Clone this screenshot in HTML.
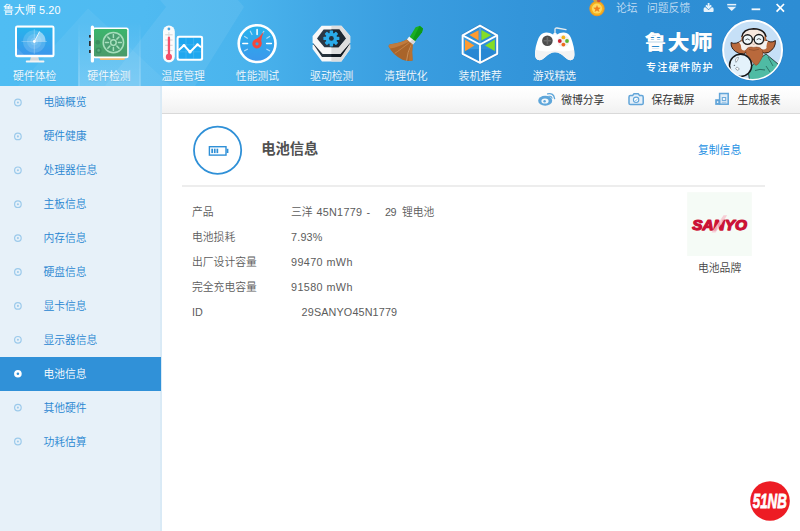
<!DOCTYPE html>
<html lang="zh-CN">
<head>
<meta charset="utf-8">
<title>鲁大师 5.20</title>
<style>
*{box-sizing:border-box;margin:0;padding:0}
html,body{width:800px;height:531px;overflow:hidden;background:#fff}
body{font-family:"Liberation Sans","Noto Sans CJK SC",sans-serif;font-size:10.8px;font-weight:350;color:#555;position:relative}
#hdr{position:absolute;left:0;top:0;width:800px;height:85.8px;background:linear-gradient(90deg,#4fbdf3 0%,#4fbaf1 18%,#4ab4ed 30%,#41a8e6 40%,#3a9ee0 50%,#3395da 65%,#2e8fd5 80%,#2d8dd4 100%);overflow:hidden}
#hdr svg.art{position:absolute;left:0;top:0}
#title{position:absolute;left:3px;top:1.6px;color:#fff;font-size:10.8px;font-weight:400;letter-spacing:.15px;line-height:16px;white-space:nowrap}
.lbl{position:absolute;top:67.8px;width:60px;font-weight:350;text-shadow:0 1px 1px rgba(0,0,0,.08);text-align:center;color:#f4fafe;font-size:10.8px;line-height:16px;white-space:nowrap}
.tl{position:absolute;top:0;color:#c2ddf3;font-size:10.8px;line-height:16px;white-space:nowrap}
#brand{position:absolute;left:644.6px;top:28.2px;color:#fff;font-size:22px;font-weight:900;line-height:32px;white-space:nowrap;letter-spacing:1px;text-shadow:0 1px 1px rgba(0,0,0,.18);transform:scaleY(.935);transform-origin:0 0}
#slogan{position:absolute;left:646px;top:59.6px;color:#fff;font-size:10.1px;font-weight:500;line-height:16px;white-space:nowrap;letter-spacing:1.2px}
#side{position:absolute;left:0;top:86px;width:162px;height:445px;background:linear-gradient(90deg,#e7f1f9 0,#e7f1f9 159.6px,#d9eaf6 160.6px,#d9eaf6 100%)}
.it{position:absolute;left:0;width:162px;height:34px;color:#2886d1;font-size:10.8px;line-height:34.6px;padding-left:43.4px;white-space:nowrap}
.it.on{background:#3091d8;color:#fff;top:271px!important;width:161.2px;height:33.8px;line-height:35px}
#tool{position:absolute;left:162px;top:86px;width:638px;height:28px;background:linear-gradient(180deg,#ffffff 0%,#fbfbfb 40%,#f1f1f1 100%);border-bottom:1px solid #d9d9d9}
.tb{position:absolute;top:0;height:28px;line-height:28px;color:#333;font-weight:400;font-size:10.8px;white-space:nowrap}
#tool svg{position:absolute;left:0;top:0}
#circ{position:absolute;left:193px;top:126px;width:49px;height:49px;border:2px solid #2f90d7;border-radius:50%}
#h1{position:absolute;left:261.2px;top:137.5px;font-size:14.3px;font-weight:700;color:#505050;line-height:22px;white-space:nowrap}
#copy{position:absolute;left:698px;top:141px;color:#2591e4;font-weight:400;font-size:10.8px;line-height:18px;white-space:nowrap}
#hr{position:absolute;left:182px;top:184.8px;width:583px;height:2px;background:#ededed}
.row{position:absolute;left:192px;height:18px;line-height:18px;color:#5c5c5c;font-size:10.8px;white-space:nowrap}
.row span{position:absolute;left:99px;top:0;white-space:pre}
#logo{position:absolute;left:687px;top:192px;width:65px;height:64px;background:#f5faf5}
#logot{position:absolute;left:698px;top:259px;color:#444;font-size:10.8px;line-height:18px;white-space:nowrap}
#wm{position:absolute;left:750px;top:481px;width:40px;height:40px}
#mainart{position:absolute;left:0;top:0}
#sidedots{position:absolute;left:0;top:0}
</style>
</head>
<body>
<div id="hdr">
  <svg class="art" width="800" height="86" viewBox="0 0 800 86">
    <defs>
      <linearGradient id="gscr" x1="0" y1="0" x2="0" y2="1"><stop offset="0" stop-color="#27b3ec"/><stop offset="1" stop-color="#3b97ec"/></linearGradient>
      <linearGradient id="ggrn" x1="0" y1="0" x2="0" y2="1"><stop offset="0" stop-color="#3bb56c"/><stop offset="1" stop-color="#4b9a6b"/></linearGradient>
      <linearGradient id="gsel" x1="0" y1="0" x2="0" y2="1"><stop offset="0" stop-color="#fff" stop-opacity="0"/><stop offset="1" stop-color="#fff" stop-opacity=".17"/></linearGradient>
    </defs>
    <!-- decorative facets -->
    <polygon points="18,86 88,8.5 171,86" fill="#ffffff" opacity=".055"/>
    <polygon points="160,0 166,7 105,86 195,86 244,7 238,0" fill="#ffffff" opacity=".07"/>
    <!-- selected tab -->
    <rect x="78.6" y="22" width="61.6" height="64" fill="url(#gsel)"/>
    <rect x="78.4" y="22" width="1" height="64" fill="url(#gsel)"/><rect x="139.6" y="22" width="1" height="64" fill="url(#gsel)"/><rect x="78.4" y="22" width="1" height="64" fill="url(#gsel)"/><rect x="139.6" y="22" width="1" height="64" fill="url(#gsel)"/>
        <!-- 1 monitor -->
    <g>
      <polygon points="31,56.5 38.2,56.5 39.4,61.2 29.8,61.2" fill="#d5d8da"/>
      <rect x="25.8" y="60.6" width="18.6" height="2" rx=".8" fill="#f4f4f4"/>
      <rect x="15" y="25.6" width="39.5" height="31.6" rx="2.2" fill="#ffffff"/>
      <rect x="17" y="27.6" width="35.5" height="27.2" fill="url(#gscr)"/>
      <polygon points="17,54.8 17,48 24,54.8" fill="#fff" opacity=".12"/>
      <circle cx="34.3" cy="41.5" r="11.3" fill="#fff" opacity=".16"/>
      <circle cx="34.3" cy="41.5" r="7.4" fill="#fff" opacity=".12"/>
      <circle cx="34.3" cy="41.5" r="3.8" fill="#fff" opacity=".12"/>
      <path d="M21.5 41.5H47M34.3 29V54" stroke="#fff" stroke-width=".7" opacity=".35" fill="none"/>
      <path d="M34.3 41.5L39.6 31.5A11.3 11.3 0 0 1 45.6 41.5Z" fill="#fff" opacity=".38"/>
      <path d="M34.3 41.5L39.6 31.5" stroke="#fff" stroke-width="1" opacity=".8"/>
      <circle cx="34.3" cy="41.5" r="1.4" fill="#fff"/>
    </g>
    <!-- 2 graphics card -->
    <g>
      <rect x="89" y="35" width="2.2" height="2.6" fill="#2b2f33"/>
      <rect x="89" y="41" width="2.2" height="5" fill="#2b2f33"/>
      <rect x="89" y="50" width="2.2" height="3" fill="#2b2f33"/>
      <polygon points="99.3,57.5 125.3,57.5 124.3,60 100.3,60" fill="#f1bb74"/>
      <rect x="90.8" y="25.6" width="3.2" height="37" rx="1.5" fill="#ffffff"/>
      <rect x="92.5" y="27.4" width="36.2" height="30.8" rx="2.2" fill="#ffffff"/>
      <rect x="94" y="29" width="33.2" height="27.4" rx="1.2" fill="url(#ggrn)"/>
      <circle cx="97.8" cy="42.2" r="2.3" fill="#3a8f60"/>
      <circle cx="98.6" cy="50.4" r="3" fill="#3a8f60"/>
      <circle cx="98.6" cy="50.4" r="1.3" fill="#5fae83"/>
      <circle cx="113.4" cy="42.6" r="10.2" fill="#4a9f72" stroke="#a6debc" stroke-width="1.5"/>
      <g stroke="#a6debc" stroke-width="1.5" stroke-linecap="round">
        <path d="M113.4 34.6V37.6M113.4 47.6V50.6M105.4 42.6H108.4M118.4 42.6H121.4M107.8 37L109.9 39.1M116.9 46.1L119 48.2M107.8 48.2L109.9 46.1M116.9 39.1L119 37"/>
      </g>
      <circle cx="113.4" cy="42.6" r="2.8" fill="none" stroke="#a6debc" stroke-width="1.5"/>
    </g>
    <!-- 3 thermometer + chart -->
    <g>
      <rect x="163" y="25.6" width="11.8" height="36.8" rx="5.9" fill="#fbfbfb"/>
      <circle cx="168.9" cy="29" r="1.4" fill="#4aa8e4"/>
      <path d="M165.2 34.8H172.6M165.2 40H172.6M165.2 45.3H172.6M165.2 50.6H172.6" stroke="#cfcfcf" stroke-width=".9"/>
      <path d="M168.9 32V36" stroke="#d8d8d8" stroke-width="1"/>
      <rect x="167.8" y="36.6" width="2.3" height="20" rx="1.1" fill="#f5506a"/>
      <circle cx="168.9" cy="56.9" r="3.1" fill="#f5506a"/>
      <rect x="176.6" y="35.8" width="26.5" height="25" rx="2.2" fill="#ffffff"/>
      <rect x="178.6" y="37.8" width="22.5" height="21" rx="1" fill="#1fa7ef"/>
      <path d="M186 37.8V58.8M193.6 37.8V58.8M178.6 44.8H201.1M178.6 51.8H201.1" stroke="#fff" stroke-width=".5" opacity=".25"/>
      <path d="M178.6 50.2L184 45.3L190 52L197.5 44.5L201.1 47.2" fill="none" stroke="#fff" stroke-width="2" stroke-linejoin="round"/>
      <circle cx="184" cy="45.6" r="1.5" fill="#fff"/><circle cx="190" cy="51.9" r="1.6" fill="#fff"/><circle cx="197.5" cy="44.8" r="1.5" fill="#fff"/>
    </g>
    <!-- 4 gauge -->
    <g>
      <circle cx="257.1" cy="43.6" r="18.4" fill="url(#gscr)" stroke="#ffffff" stroke-width="2.6"/>
      <g stroke="#fff" stroke-linecap="round">
        <path d="M257.1 29.4V34.4M242.8 43.6H247.6M266.6 43.6H271.4" stroke-width="1.5"/>
        <path d="M250.3 31.2L252 34.5M244.6 36.4L247.4 38.2M269.6 36.4L266.8 38.2M244.6 50.8L247.4 49.2M269.6 50.8L266.8 49.2M263.8 31.3L263 33" stroke-width="1.2" opacity=".6"/>
      </g>
      <path d="M264 31.4Q260.6 38.6 261.4 43.4L254.6 40.2Q260 37 264 31.4Z" fill="#f4483c"/>
      <circle cx="257" cy="43.8" r="4.7" fill="#f4483c"/>
      <circle cx="257" cy="43.8" r="1.6" fill="#2fa4ea"/>
    </g>

    <!-- 5 driver hex -->
    <g>
      <polygon points="312.6,45 312.6,49 322,61.5 341.4,61.5 350.2,49 350.2,45 341,44 322,44" fill="#f7f7f7"/>
      <polygon points="331.4,44 350.2,44 350.2,49 341.4,61.5 331.4,61.5" fill="#dddddd"/>
      <polygon points="312.9,43.6 349.9,43.6 340.8,57 322,57" fill="#26323c"/>
      <polygon points="331.4,43.6 349.9,43.6 340.8,57 331.4,57" fill="#121a22"/>
      <polygon points="321.6,25.7 341.4,25.7 350.2,36 350.2,42.4 340.2,54 322.6,54 312.6,42.4 312.6,36" fill="#f8f8f8"/>
      <polygon points="331.4,25.7 341.4,25.7 350.2,36 350.2,42.4 340.2,54 331.4,54" fill="#dedede"/>
      <polygon points="317,38.5 323.6,29.6 339.4,29.6 345.8,38.5 338.6,47.2 324.4,47.2" fill="#2b3946"/>
      <polygon points="331.4,29.6 339.4,29.6 345.8,38.5 338.6,47.2 331.4,47.2" fill="#1e2832"/>
      <g transform="translate(331.4 38.4)">
        <g fill="#2aabea">
          <circle r="5.7"/>
          <rect x="-1.7" y="-8" width="3.4" height="16" rx=".7"/>
          <rect x="-1.7" y="-8" width="3.4" height="16" rx=".7" transform="rotate(45)"/>
          <rect x="-1.7" y="-8" width="3.4" height="16" rx=".7" transform="rotate(90)"/>
          <rect x="-1.7" y="-8" width="3.4" height="16" rx=".7" transform="rotate(135)"/>
        </g>
        <circle r="2.4" fill="#26323e"/>
      </g>
    </g>
    <!-- 6 broom -->
    <g>
      <path d="M415.6 27.2L420 25.8L423 28.6L422 32.2L414.6 41.6L409.4 37.4Z" fill="#1aae22"/>
      <path d="M419.5 26L423 28.6L422 32.2L414.6 41.6L412.5 39.9Z" fill="#0e9a18"/>
      <path d="M409.2 36.6L415.4 41.6L412.6 45L406.6 40Z" fill="#f2f2f2"/>
      <path d="M412.4 39.2L415.4 41.6L412.6 45L409.8 42.6Z" fill="#d6d6d6"/>
      <path d="M406.8 39.6L412.8 44.6Q411.6 52 412.6 60.4Q407 61.6 402.4 59.8Q392.6 54.8 388.6 46.6Q388.4 44.6 390.4 44.2Q400 43.4 406.8 39.6Z" fill="#a9642a"/>
      <path d="M406.8 39.6L409.2 41.6Q398 47.6 390.2 48.6L388.6 46.6Q388.4 44.6 390.4 44.2Q400 43.4 406.8 39.6Z" fill="#c07b3d"/>
      <path d="M409.6 42.4Q400 50 394.6 53.4" stroke="#c98a4c" stroke-width="1" fill="none" opacity=".8"/>
      <path d="M411.6 44Q407.2 52.4 406.6 60.6" stroke="#d6a06a" stroke-width=".8" fill="none" opacity=".9"/>
      <path d="M412.6 45Q411.6 52 412.6 60.4L409 60.9Q408.6 52 411.4 44Z" fill="#b8712f"/>
    </g>
    <!-- 7 cube -->
    <g>
      <polygon points="480,25.6 497.2,35.4 497.2,53.8 480,62.8 462.6,53.8 462.6,35.4" fill="#2f8fd8" stroke="#2b82c8" stroke-width="3" stroke-linejoin="round" />
      <polygon points="462.6,35.4 480,44.6 480,62.8 462.6,53.8" fill="#3a9be0"/>
      <polygon points="465,50.8 480,58.6 480,62 465,53.4" fill="#2683cf" opacity=".9"/>
      <polygon points="465.6,49.6 478.6,49 478.6,60.6 465.6,53" fill="#2787d3"/>
      <polygon points="481.4,49 494.4,49.6 494.4,53 481.4,60.6" fill="#2787d3"/>
      <polygon points="469.4,35 478.6,30.2 478.6,40.6" fill="#ff9b30"/>
      <polygon points="481.4,30 491.2,35.2 481.4,40.6" fill="#84dd25"/>
      <polygon points="465,39.4 474.4,45.4 465,51.2" fill="#ff9b30"/>
      <polygon points="494.8,39.6 494.8,51 485,45.6" fill="#84dd25"/>
      <polygon points="480,25.6 497.2,35.4 497.2,53.8 480,62.8 462.6,53.8 462.6,35.4" fill="none" stroke="#ffffff" stroke-width="2" stroke-linejoin="round"/>
      <path d="M462.6 35.4L480 44.6L497.2 35.4M480 44.6V62.8" fill="none" stroke="#ffffff" stroke-width="1.8"/>
      <path d="M480 26V44.6" stroke="#fff" stroke-width=".6" opacity=".5"/>
    </g>
    <!-- 8 gamepad -->
    <g>
      <path d="M555 34V29.6Q555 27.8 557 28L566 29.6" fill="none" stroke="#e8ecee" stroke-width="1.3" stroke-linecap="round"/>
      <rect x="553.2" y="33" width="3.6" height="3.4" rx="1.2" fill="#fafafa"/>
      <path d="M546 32.6Q550 32.4 553 34.6Q555 35.6 557 34.6Q560 32.4 564 32.6Q569 33 571 38Q574.6 47 574.4 55Q574.2 60 570.6 60.2Q567.6 60.2 564 56.6Q560 52.4 555 52.2Q550 52.4 546 56.6Q542.4 60.2 539.4 60.2Q535.4 60 535 55Q534.8 47 538.6 38Q541 33 546 32.6Z" fill="#ffffff"/>
      <path d="M536 50Q545 52.6 555 50.6Q565 52.6 574 50Q574.6 55 574.4 55Q574.2 60 570.6 60.2Q567.6 60.2 564 56.6Q560 52.4 555 52.2Q550 52.4 546 56.6Q542.4 60.2 539.4 60.2Q535.4 60 535 55Z" fill="#f3f3f3"/>
      <circle cx="547.4" cy="40.8" r="5.3" fill="#4c4c4c"/>
      <path d="M547.4 37V44.6M543.6 40.8H551.2" stroke="#6a6a6a" stroke-width="1.6"/>
      <circle cx="563.4" cy="41" r="6" fill="#f1f1f1"/>
      <circle cx="563.4" cy="37.4" r="1.9" fill="#f6b31a"/>
      <circle cx="559.8" cy="41" r="1.9" fill="#cf2430"/>
      <circle cx="567" cy="41" r="1.9" fill="#5cb531"/>
      <circle cx="563.4" cy="44.6" r="1.9" fill="#ec6a1e"/>
    </g>

    <!-- avatar -->
    <g>
      <clipPath id="avc"><circle cx="752.6" cy="50" r="29"/></clipPath>
      <circle cx="752.6" cy="50" r="30.8" fill="none" stroke="#2a80c6" stroke-width="1" opacity=".5"/>
      <circle cx="752.6" cy="50" r="29.5" fill="#c6e0f7" stroke="#ffffff" stroke-width="1.9"/>
      <g clip-path="url(#avc)">
        <!-- shirt -->
        <path d="M748 70Q756 60 766 54L778 64L786 80L750 84Z" fill="#4fbba4" stroke="#1d2a2a" stroke-width=".8"/>
        <path d="M755 70.5Q760 68.5 765 70" fill="none" stroke="#1f5a50" stroke-width=".8"/>
        <path d="M768 57L773 66M766 66L770 72" fill="none" stroke="#1f5a50" stroke-width=".7"/>
        <!-- side hair -->
        <path d="M742 40Q736 45 731 42.6Q730.6 50 739 53.4Q744 55 747 52Z" fill="#b9693c" stroke="#241612" stroke-width=".9"/>
        <path d="M765 39Q770 44 775.4 40.6Q776 48 768.6 52.4Q764 54.6 760 51Z" fill="#b9693c" stroke="#241612" stroke-width=".9"/>
        <!-- head -->
        <path d="M741.6 42Q741 30 753.6 29.4Q766.4 30 766 42Q766 50 753.8 51Q741.6 50 741.6 42Z" fill="#f8e9df"/>
        <path d="M741.8 37Q743 29 753.6 28.8Q764.6 29 766 37" fill="none" stroke="#1c1512" stroke-width="1.5"/>
        <path d="M741.6 36.5Q740.6 40 742.4 43.5L744 42.5Q742.6 39.6 743.4 36.4Z" fill="#b9693c"/><path d="M766 36.5Q767 40 765.2 43.5L763.6 42.5Q765 39.6 764.2 36.4Z" fill="#b9693c"/>
        <!-- white whiskers -->
        <path d="M739 42Q741.6 45 741.4 49Q744 52 748 49Q745 45 743.4 41Z" fill="#f4f1ee"/>
        <path d="M768 41Q766 44 766.6 48Q764 51 760 48Q763 45 764.4 41Z" fill="#f4f1ee"/>
        <!-- beard -->
        <path d="M745.6 50.4Q748 46 753.6 47.4Q760 46 762.4 50.4Q764.4 56 760.4 60.6Q758.6 64.6 756 65.4Q752.4 62.6 749.4 58.4Q745.4 55 745.6 50.4Z" fill="#b9693c" stroke="#7a3f22" stroke-width=".5"/>
        <path d="M749 49.4Q753.8 51.4 759 49.2" fill="none" stroke="#8a4a28" stroke-width=".7"/>
        <!-- glasses -->
        <circle cx="747.6" cy="39.6" r="4.8" fill="#eef7fb" stroke="#1a1a1a" stroke-width="1.4"/>
        <circle cx="758.9" cy="39.3" r="4.8" fill="#eef7fb" stroke="#1a1a1a" stroke-width="1.4"/>
        <path d="M752.2 39.2H754.4" stroke="#1a1a1a" stroke-width="1.1"/>
        <path d="M745.4 40Q747.6 37.8 749.8 40M756.7 39.7Q758.9 37.5 761.1 39.7" fill="none" stroke="#2a2a2a" stroke-width=".8"/>
        <path d="M752.4 43.6Q753.6 45.6 755 43.6" fill="none" stroke="#c9a48e" stroke-width=".7"/>
        <!-- magnifier -->
        <circle cx="740.6" cy="65.4" r="11.1" fill="#e4f2fb" stroke="#15181a" stroke-width="1.5"/>
        <path d="M735.8 58.6Q737 57 738.6 57.4Q738 60.4 736 62.4Q735 60.4 735.8 58.6Z" fill="#fff" stroke="#6a7680" stroke-width=".6"/>
        <rect x="735.8" y="67.6" width="3.2" height="2.4" rx=".8" fill="#fff" stroke="#6a7680" stroke-width=".6" transform="rotate(35 737.4 68.8)"/>
        <circle cx="734.4" cy="65.4" r=".7" fill="#6a7680"/>
      </g>
    </g>
    <!-- top right icons -->
    <g>
      <circle cx="597" cy="8.6" r="7.2" fill="#f6b21c" stroke="#e9952a" stroke-width="1"/>
      <circle cx="597" cy="8.6" r="5" fill="#fdd860"/>
      <polygon points="597,5 598,7.6 600.8,7.7 598.6,9.4 599.4,12.1 597,10.5 594.6,12.1 595.4,9.4 593.2,7.7 596,7.6" fill="#f07f1c"/>
      <path d="M593 0H597L596.4 2.2H594.4Z" fill="#d8a13a"/><path d="M597 0H601L599.6 2.2H597.6Z" fill="#c9503a"/>
      <!-- download tray -->
      <g transform="translate(0 .5)"><path d="M708.6 2.6V6.4M706 4.8L708.6 7.6L711.2 4.8" fill="none" stroke="#e6f2fb" stroke-width="1.8" stroke-linejoin="round"/>
      <path d="M703.6 8.4Q703.6 6.6 705.4 6.8L708.6 9.4L711.8 6.8Q713.6 6.6 713.6 8.4V10.4Q713.6 11.4 712.6 11.4H704.6Q703.6 11.4 703.6 10.4Z" fill="#e6f2fb"/></g>
      <!-- menu -->
      <rect x="727.2" y="3.9" width="9" height="1.5" fill="#e6f2fb"/>
      <polygon points="727.2,6.8 736.2,6.8 731.7,11" fill="#e6f2fb"/>
      <!-- minimize -->
      <rect x="751.6" y="8.4" width="8.6" height="1.8" fill="#f2f8fd"/>
      <!-- close -->
      <path d="M776.6 4L784 11.6M784 4L776.6 11.6" stroke="#ffffff" stroke-width="1.7"/>
    </g>

  </svg>
  <div id="title">鲁大师 5.20</div>
  <div class="lbl" style="left:4.70px">硬件体检</div>
  <div class="lbl" style="left:78.95px">硬件检测</div>
  <div class="lbl" style="left:153.20px">温度管理</div>
  <div class="lbl" style="left:227.45px">性能测试</div>
  <div class="lbl" style="left:301.70px">驱动检测</div>
  <div class="lbl" style="left:375.95px">清理优化</div>
  <div class="lbl" style="left:450.20px">装机推荐</div>
  <div class="lbl" style="left:524.45px">游戏精选</div>
  <div class="tl" style="left:616px">论坛</div>
  <div class="tl" style="left:647px">问题反馈</div>
  <div id="brand">鲁大师</div>
  <div id="slogan">专注硬件防护</div>
</div>

<div id="side">
  <div class="it" style="top:-0.8px">电脑概览</div>
  <div class="it" style="top:33.2px">硬件健康</div>
  <div class="it" style="top:67.2px">处理器信息</div>
  <div class="it" style="top:101.2px">主板信息</div>
  <div class="it" style="top:135.2px">内存信息</div>
  <div class="it" style="top:169.2px">硬盘信息</div>
  <div class="it" style="top:203.2px">显卡信息</div>
  <div class="it" style="top:237.2px">显示器信息</div>
  <div class="it on" style="top:271.2px">电池信息</div>
  <div class="it" style="top:305.2px">其他硬件</div>
  <div class="it" style="top:339.2px">功耗估算</div>
  <svg id="sidedots" width="40" height="445" viewBox="0 0 40 445"><circle cx="17.9" cy="16.50" r="3.3" fill="none" stroke="#9ccaeb" stroke-width="1.2"/><circle cx="17.9" cy="16.50" r="1.05" fill="#9ccaeb"/><circle cx="17.9" cy="50.40" r="3.3" fill="none" stroke="#9ccaeb" stroke-width="1.2"/><circle cx="17.9" cy="50.40" r="1.05" fill="#9ccaeb"/><circle cx="17.9" cy="84.30" r="3.3" fill="none" stroke="#9ccaeb" stroke-width="1.2"/><circle cx="17.9" cy="84.30" r="1.05" fill="#9ccaeb"/><circle cx="17.9" cy="118.20" r="3.3" fill="none" stroke="#9ccaeb" stroke-width="1.2"/><circle cx="17.9" cy="118.20" r="1.05" fill="#9ccaeb"/><circle cx="17.9" cy="152.10" r="3.3" fill="none" stroke="#9ccaeb" stroke-width="1.2"/><circle cx="17.9" cy="152.10" r="1.05" fill="#9ccaeb"/><circle cx="17.9" cy="186.00" r="3.3" fill="none" stroke="#9ccaeb" stroke-width="1.2"/><circle cx="17.9" cy="186.00" r="1.05" fill="#9ccaeb"/><circle cx="17.9" cy="219.90" r="3.3" fill="none" stroke="#9ccaeb" stroke-width="1.2"/><circle cx="17.9" cy="219.90" r="1.05" fill="#9ccaeb"/><circle cx="17.9" cy="253.80" r="3.3" fill="none" stroke="#9ccaeb" stroke-width="1.2"/><circle cx="17.9" cy="253.80" r="1.05" fill="#9ccaeb"/><circle cx="17.9" cy="287.70" r="3.8" fill="#fff"/><circle cx="17.9" cy="287.70" r="1.3" fill="#2f90d7"/><circle cx="17.9" cy="321.60" r="3.3" fill="none" stroke="#9ccaeb" stroke-width="1.2"/><circle cx="17.9" cy="321.60" r="1.05" fill="#9ccaeb"/><circle cx="17.9" cy="355.50" r="3.3" fill="none" stroke="#9ccaeb" stroke-width="1.2"/><circle cx="17.9" cy="355.50" r="1.05" fill="#9ccaeb"/></svg>
</div>
<div id="tool">
  <svg width="638" height="28" viewBox="162 86 638 28">
    <!-- weibo -->
    <g fill="none" stroke="#5ea6da">
      <ellipse cx="545.2" cy="100.7" rx="7" ry="5" fill="#5ea6da" stroke="none"/>
      <ellipse cx="545" cy="101" rx="3.6" ry="2.6" fill="#f4f8fb" stroke="none"/>
      <circle cx="544.6" cy="101.2" r="1.2" fill="#5ea6da" stroke="none"/>
      <path d="M548.8 96.4Q551.4 95.6 552 98.2" stroke-width="1.1" stroke-linecap="round"/>
      <path d="M547.6 93.8Q553.6 92.6 554.6 98.6" stroke-width="1.3" stroke-linecap="round"/>
    </g>
    <!-- camera -->
    <g>
      <path d="M630.4 95.6H632.6L633.8 93.8H638.4L639.6 95.6H641.8Q643.2 95.6 643.2 97V103.2Q643.2 104.6 641.8 104.6H630.4Q629 104.6 629 103.2V97Q629 95.6 630.4 95.6Z" fill="#e6f0f9" stroke="#62a5d9" stroke-width="1.5" stroke-linejoin="round"/>
      <circle cx="636.1" cy="99.8" r="2.7" fill="#fff" stroke="#62a5d9" stroke-width="1.1"/>
      <path d="M635 99.9L635.9 100.8L637.4 98.9" fill="none" stroke="#6aa9da" stroke-width=".7"/>
    </g>
    <!-- report -->
    <g>
      <rect x="719.6" y="93.5" width="8.6" height="10.7" fill="#dfecf7" stroke="#62a5d9" stroke-width="1.5"/>
      <rect x="715.2" y="99.2" width="5" height="5.7" fill="#62a5d9"/>
      <rect x="716.9" y="101.2" width="1.4" height="1.8" fill="#e6f1fa"/>
      <rect x="722.3" y="97.6" width="3.4" height="2.8" fill="#fff" stroke="#62a5d9" stroke-width="1"/>
      <path d="M721.8 102.3H726.4" stroke="#8fbfe4" stroke-width=".9"/>
    </g>
  </svg>
  <div class="tb" style="left:399.2px">微博分享</div>
  <div class="tb" style="left:489.4px">保存截屏</div>
  <div class="tb" style="left:575.4px">生成报表</div>
</div>
<svg id="mainart" width="800" height="531" viewBox="0 0 800 531" style="pointer-events:none">
  <circle cx="217.6" cy="150.2" r="23.6" fill="#fff" stroke="#2f90d7" stroke-width="1.8"/>
  <rect x="209.4" y="146.7" width="16.6" height="8.4" fill="#fff" stroke="#2f90d7" stroke-width="1.4"/>
  <rect x="226.6" y="148.8" width="1.8" height="4.2" fill="#2f90d7"/>
  <rect x="211.3" y="148.7" width="1.7" height="4.4" fill="#2f90d7"/>
  <rect x="213.9" y="148.7" width="1.7" height="4.4" fill="#2f90d7"/>
  <rect x="216.5" y="148.7" width="1.7" height="4.4" fill="#2f90d7"/>
  <rect x="687.2" y="192.2" width="64.6" height="63.8" fill="#f5fbf6"/>
  <text x="719.6" y="229.5" text-anchor="middle" font-family="Liberation Sans, sans-serif" font-weight="bold" font-style="italic" font-size="14.4" fill="#cb1235" stroke="#cb1235" stroke-width="1.25" stroke-linejoin="round" textLength="54.6" lengthAdjust="spacingAndGlyphs">SANYO</text>
  <polygon points="711.6,232.4 715.6,232.4 727.2,215.2 723.6,215.2" fill="#f7c3cd" opacity=".8"/>
</svg>
<div id="h1">电池信息</div>
<div id="copy">复制信息</div>
<div id="hr"></div>
<div class="row" style="top:203.1px">产品<span>三洋</span><span style="left:124.4px;letter-spacing:.3px">45N1779</span><span style="left:174.4px">-</span><span style="left:193px;letter-spacing:-.6px">29</span><span style="left:210px">锂电池</span></div>
<div class="row" style="top:228.1px">电池损耗<span style="letter-spacing:.2px">7.93%</span></div>
<div class="row" style="top:253.1px">出厂设计容量<span style="letter-spacing:.4px">99470 mWh</span></div>
<div class="row" style="top:278.1px">完全充电容量<span style="letter-spacing:.4px">91580 mWh</span></div>
<div class="row" style="top:303.1px">ID<span style="left:109.6px;letter-spacing:.14px">29SANYO45N1779</span></div>
<div id="logot">电池品牌</div>
<svg id="wm" viewBox="0 0 40 40"><circle cx="20" cy="20" r="19.8" fill="#ed1c24"/><text x="19.8" y="26.6" text-anchor="middle" font-family="Liberation Sans, sans-serif" font-weight="bold" font-style="italic" font-size="20" fill="#fff" stroke="#fff" stroke-width=".8" textLength="34" lengthAdjust="spacingAndGlyphs">51NB</text></svg>

</body>
</html>
